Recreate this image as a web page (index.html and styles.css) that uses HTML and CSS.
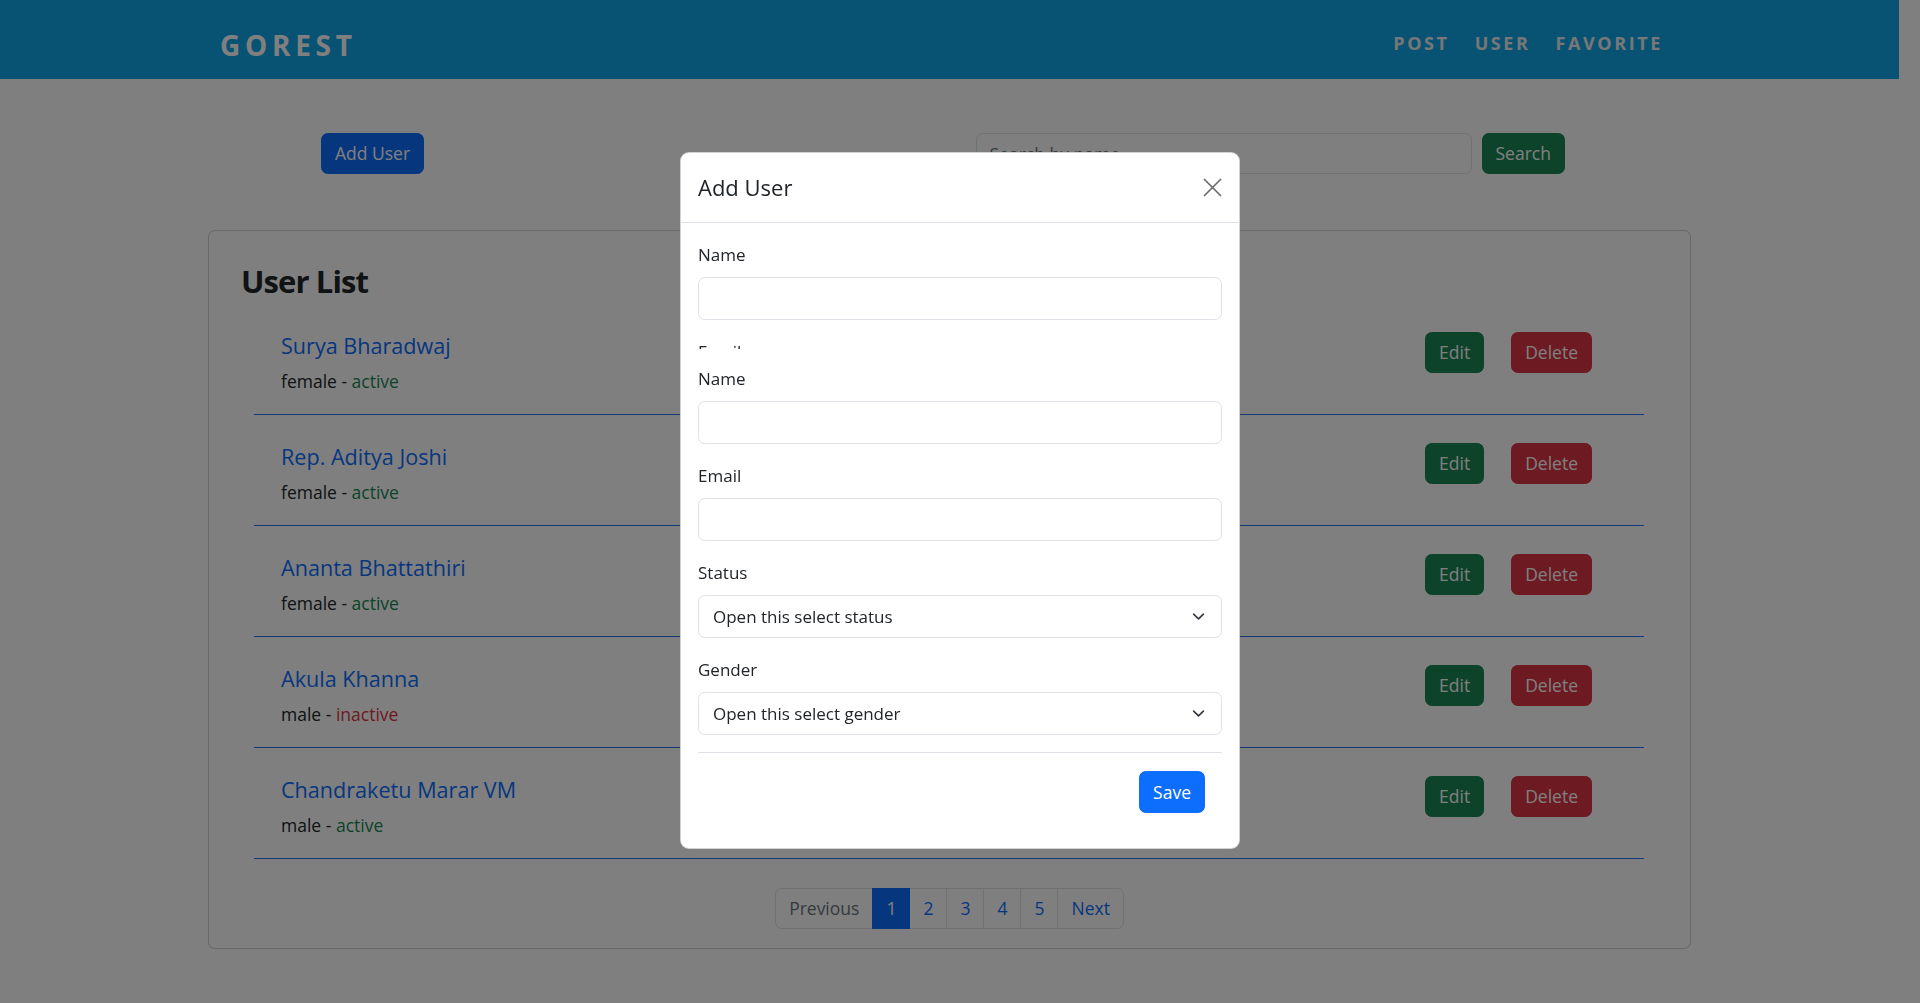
FILE: index.html
```html
<!DOCTYPE html>
<html lang="en">
<head>
<meta charset="utf-8">
<title>GoRest Users</title>
<link rel="stylesheet" href="styles.css">
</head>
<body>
<header class="topbar">
  <div class="topbar-inner">
    <div class="brand">GOREST</div>
    <nav class="nav">
      <a class="nav-link" href="#">POST</a>
      <a class="nav-link" href="#">USER</a>
      <a class="nav-link" href="#">FAVORITE</a>
    </nav>
  </div>
</header>

<main>
  <div class="toolbar">
    <div class="toolbar-left">
      <button class="btn btn-primary" type="button">Add User</button>
    </div>
    <form class="search">
      <input class="search-input" type="text" placeholder="Search by name">
      <button class="btn btn-success" type="button">Search</button>
    </form>
  </div>

  <section class="card">
    <h2 class="card-title">User List</h2>
    <ul class="users">
      <li class="user">
        <div class="user-info">
          <div class="user-name">Surya Bharadwaj</div>
          <div class="user-meta">female - <span class="st-active">active</span></div>
        </div>
        <div class="user-actions">
          <button class="btn btn-success" type="button">Edit</button>
          <button class="btn btn-danger" type="button">Delete</button>
        </div>
      </li>
      <li class="user">
        <div class="user-info">
          <div class="user-name">Rep. Aditya Joshi</div>
          <div class="user-meta">female - <span class="st-active">active</span></div>
        </div>
        <div class="user-actions">
          <button class="btn btn-success" type="button">Edit</button>
          <button class="btn btn-danger" type="button">Delete</button>
        </div>
      </li>
      <li class="user">
        <div class="user-info">
          <div class="user-name">Ananta Bhattathiri</div>
          <div class="user-meta">female - <span class="st-active">active</span></div>
        </div>
        <div class="user-actions">
          <button class="btn btn-success" type="button">Edit</button>
          <button class="btn btn-danger" type="button">Delete</button>
        </div>
      </li>
      <li class="user">
        <div class="user-info">
          <div class="user-name">Akula Khanna</div>
          <div class="user-meta">male - <span class="st-inactive">inactive</span></div>
        </div>
        <div class="user-actions">
          <button class="btn btn-success" type="button">Edit</button>
          <button class="btn btn-danger" type="button">Delete</button>
        </div>
      </li>
      <li class="user">
        <div class="user-info">
          <div class="user-name">Chandraketu Marar VM</div>
          <div class="user-meta">male - <span class="st-active">active</span></div>
        </div>
        <div class="user-actions">
          <button class="btn btn-success" type="button">Edit</button>
          <button class="btn btn-danger" type="button">Delete</button>
        </div>
      </li>
    </ul>
    <nav class="pager">
      <a class="page-link disabled" href="#">Previous</a>
      <a class="page-link current" href="#">1</a>
      <a class="page-link" href="#">2</a>
      <a class="page-link" href="#">3</a>
      <a class="page-link" href="#">4</a>
      <a class="page-link" href="#">5</a>
      <a class="page-link" href="#">Next</a>
    </nav>
  </section>
</main>

<div class="backdrop"></div>
<div class="modal-layer">
  <div class="modal">
    <div class="modal-head">
      <h5 class="modal-title">Add User</h5>
      <button class="close" type="button" aria-label="Close">
        <svg width="19" height="19" viewBox="0 0 19 19"><path d="M1 1L18 18M18 1L1 18" stroke="#6c6c6c" stroke-width="1.7" fill="none"/></svg>
      </button>
    </div>
    <div class="modal-body">
      <div class="field">
        <label class="label">Name</label>
        <div class="control"></div>
      </div>
      <div class="ghost"><span class="ghost-clip">Email</span></div>
      <div class="field">
        <label class="label">Name</label>
        <div class="control"></div>
      </div>
      <div class="field">
        <label class="label">Email</label>
        <div class="control"></div>
      </div>
      <div class="field">
        <label class="label">Status</label>
        <div class="control select">
          <span>Open this select status</span>
          <svg width="13" height="13" viewBox="0 0 16 16"><path d="M2 5l6 6 6-6" stroke="#343a40" stroke-width="2" fill="none" stroke-linecap="round" stroke-linejoin="round"/></svg>
        </div>
      </div>
      <div class="field field-last">
        <label class="label">Gender</label>
        <div class="control select">
          <span>Open this select gender</span>
          <svg width="13" height="13" viewBox="0 0 16 16"><path d="M2 5l6 6 6-6" stroke="#343a40" stroke-width="2" fill="none" stroke-linecap="round" stroke-linejoin="round"/></svg>
        </div>
      </div>
      <div class="modal-foot">
        <button class="btn btn-primary" type="button">Save</button>
      </div>
    </div>
  </div>
</div>
</body>
</html>
```

FILE: styles.css
```css
* { box-sizing: border-box; }

body {
  margin: 0;
  padding-right: 21px;
  font-family: "Open Sans", "Liberation Sans", sans-serif;
  font-size: 17px;
  line-height: 27px;
  color: #212529;
  background: #fff;
}

.topbar {
  height: 79px;
  background: #10a4e8;
}
.topbar-inner {
  max-width: 1459px;
  height: 100%;
  margin: 0 auto;
  padding-top: 6px;
  display: flex;
  align-items: center;
  justify-content: space-between;
}
.brand {
  font-size: 28px;
  font-weight: 700;
  letter-spacing: 4.7px;
  color: #fff;
  line-height: 1;
  padding-top: 4px;
}
.nav {
  display: flex;
  gap: 25px;
  padding-right: 16px;
}
.nav-link {
  font-size: 18px;
  font-weight: 700;
  letter-spacing: 2.6px;
  color: #eee;
  text-decoration: none;
  line-height: 1;
}

.btn {
  height: 41px;
  padding: 0 13px;
  border: 1px solid transparent;
  border-radius: 6.7px;
  font-family: inherit;
  font-size: 17.5px;
  line-height: 39px;
  color: #fff;
  cursor: pointer;
}
.btn-primary { background: #0d6efd; border-color: #0d6efd; }
.btn-success { background: #198754; border-color: #198754; }
.btn-danger { background: #dc3545; border-color: #dc3545; }

.toolbar {
  width: 1483px;
  margin: 54px auto 0;
  display: grid;
  grid-template-columns: 1fr 1fr;
}
.toolbar-left { padding-left: 113px; }
.search {
  display: flex;
  gap: 10px;
  padding-left: 26px;
  margin: 0;
}
.search-input {
  width: 496px;
  height: 41px;
  padding: 0 13px;
  border: 1px solid #dee2e6;
  border-radius: 6.7px;
  font-family: inherit;
  font-size: 17.5px;
  color: #212529;
}
.search-input::placeholder { color: #6c757d; }

.card {
  width: 1483px;
  margin: 56px auto 0;
  border: 1px solid rgba(0, 0, 0, 0.175);
  border-radius: 7px;
  padding: 30px 32px 19px;
  background: #fff;
}
.card-title {
  margin: 0 0 2px;
  font-size: 31px;
  line-height: 41px;
  font-weight: 700;
  letter-spacing: -0.9px;
}
.users {
  list-style: none;
  margin: 0 14px 0 13px;
  padding: 0;
}
.user {
  display: flex;
  justify-content: space-between;
  align-items: flex-start;
  padding: 28px 52px 19px 27px;
  border-bottom: 1px solid #2c73f0;
}
.user-name {
  font-size: 21.6px;
  line-height: 27px;
  font-weight: 500;
  color: #0d6efd;
  margin-bottom: 9px;
}
.user-meta { font-size: 17.5px; }
.st-active { color: #198754; font-weight: 500; }
.st-inactive { color: #dc3545; font-weight: 500; }
.user-actions {
  display: flex;
  gap: 27px;
}

.pager {
  display: flex;
  justify-content: center;
  margin-top: 29px;
}
.page-link {
  height: 41px;
  padding: 0 13px;
  border: 1px solid #dee2e6;
  margin-left: -1px;
  line-height: 39px;
  font-size: 17.5px;
  color: #0d6efd;
  text-decoration: none;
  background: #fff;
}
.page-link:first-child { border-radius: 6.7px 0 0 6.7px; margin-left: 0; }
.page-link:last-child { border-radius: 0 6.7px 6.7px 0; }
.page-link.disabled { color: #6c757d; }
.page-link.current { background: #0d6efd; border-color: #0d6efd; color: #fff; position: relative; }

.backdrop {
  position: fixed;
  inset: 0;
  background: rgba(0, 0, 0, 0.5);
}
.modal-layer {
  position: fixed;
  inset: 0;
}
.modal {
  width: 560px;
  margin: 152px auto 0;
  background: #fff;
  border: 1px solid rgba(0, 0, 0, 0.175);
  border-radius: 9px;
}
.modal-head {
  display: flex;
  justify-content: space-between;
  align-items: center;
  padding: 16px 17px 17px;
  border-bottom: 1px solid #dee2e6;
}
.modal-title {
  margin: 0;
  font-size: 22px;
  line-height: 36px;
  font-weight: 500;
}
.close {
  width: 19px;
  height: 19px;
  padding: 0;
  border: 0;
  background: none;
  display: flex;
}
.modal-body {
  padding: 18px 17px 35px;
}
.field { margin-bottom: 18px; }
.field-last { margin-bottom: 17px; }
.label {
  display: block;
  margin-bottom: 9px;
  line-height: 27px;
}
.control {
  height: 43px;
  border: 1px solid #dee2e6;
  border-radius: 6.7px;
}
.select {
  display: flex;
  align-items: center;
  justify-content: space-between;
  padding: 0 16px 0 14px;
}
.ghost {
  height: 27px;
}
.ghost-clip {
  display: block;
  height: 11px;
  overflow: hidden;
  line-height: 27px;
}
.modal-foot {
  border-top: 1px solid #dee2e6;
  padding: 18px 17px 0;
  display: flex;
  justify-content: flex-end;
}
.modal-foot .btn { height: 42px; line-height: 40px; }
```
